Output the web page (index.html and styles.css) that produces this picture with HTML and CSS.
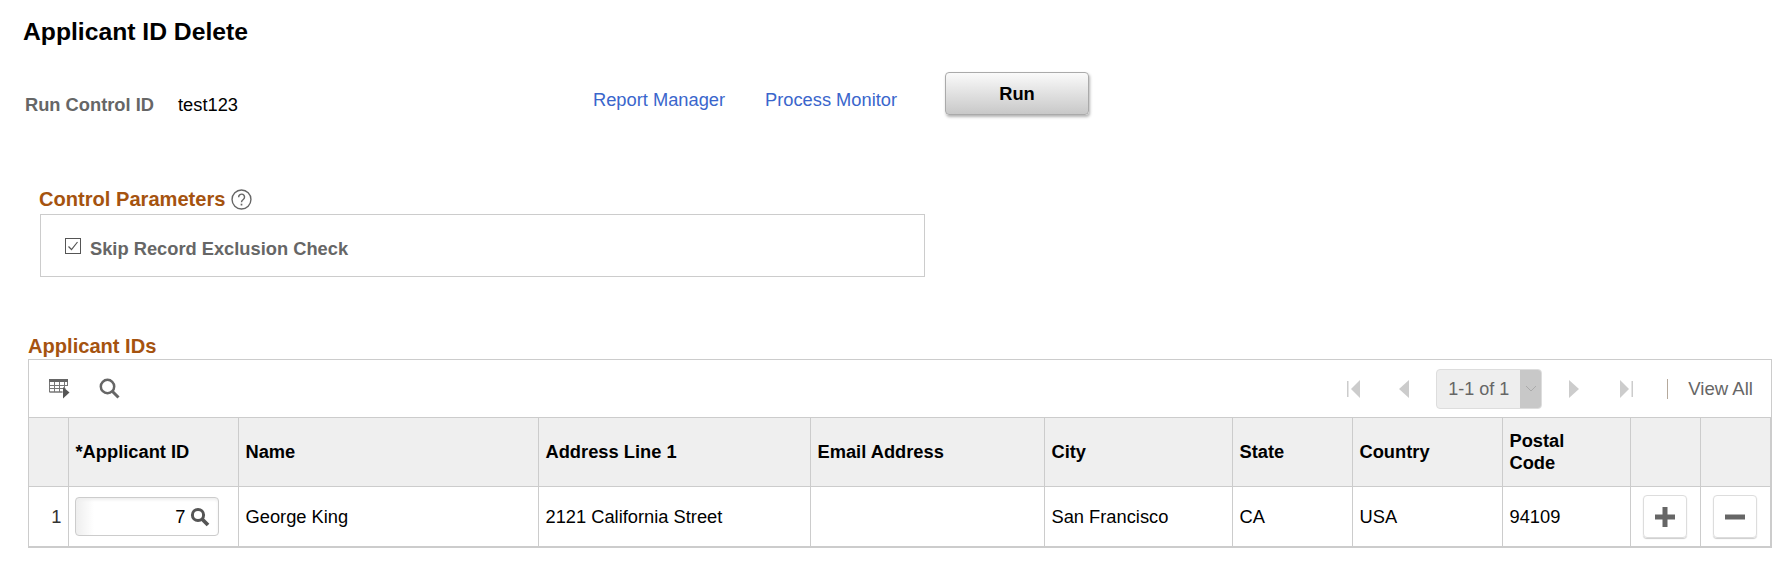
FILE: index.html
```html
<!DOCTYPE html>
<html lang="en">
<head>
<meta charset="utf-8">
<title>Applicant ID Delete</title>
<link rel="stylesheet" href="styles.css">
</head>
<body>
<h1 class="title">Applicant ID Delete</h1>
<div class="run-row">
  <span class="label">Run Control ID</span>
  <span class="value">test123</span>
  <a class="link link-first" href="#">Report Manager</a>
  <a class="link link-second" href="#">Process Monitor</a>
  <button class="run-btn" type="button">Run</button>
</div>
<section class="params">
  <h2 class="section-head">Control Parameters
    <svg class="help" viewBox="0 0 20 20" width="21" height="21"><circle cx="10" cy="10" r="9" fill="none" stroke="#666" stroke-width="1.3"/><path d="M7.3 7.8a2.8 2.8 0 1 1 4.4 2.2c-1.1.8-1.7 1.3-1.7 2.6" fill="none" stroke="#666" stroke-width="1.4"/><rect x="9.2" y="14" width="1.6" height="1.7" fill="#666"/></svg>
  </h2>
  <div class="params-box">
    <span class="check"><svg viewBox="0 0 16 16" width="16" height="16"><path d="M3.5 8.5l3 3 6-7.5" fill="none" stroke="#555" stroke-width="1.2"/></svg></span>
    <span class="check-label">Skip Record Exclusion Check</span>
  </div>
</section>
<section class="applicants">
  <h2 class="section-head grid-head">Applicant IDs</h2>
  <div class="grid">
    <div class="toolbar">
      <svg class="tool-table" viewBox="0 0 21 20" width="21" height="20">
        <rect x="0" y="0" width="19" height="3" fill="#666"/>
        <path d="M.5 3v10h13M.5 6.5h18M.5 9.5h16M.5 13h13M5.5 3v10M10.5 3v10M15.5 3v6M18.5 3v4" fill="none" stroke="#777" stroke-width="1"/>
        <path d="M14 8l6.5 5.5-6.5 6z" fill="#555"/>
      </svg>
      <svg class="tool-search" viewBox="0 0 21 21" width="21" height="21"><circle cx="8.5" cy="8.5" r="6.7" fill="none" stroke="#666" stroke-width="2.5"/><path d="M13.5 13.5l6 6" stroke="#666" stroke-width="3"/></svg>
      <div class="pager">
        <svg class="pg pg-first" viewBox="0 0 13 18" width="13" height="18"><rect x="0" y="1" width="1.5" height="16" fill="#ccc"/><path d="M13 0v18L4 9z" fill="#ccc"/></svg>
        <svg class="pg pg-prev" viewBox="0 0 10 18" width="10" height="18"><path d="M10 0v18L0 9z" fill="#ccc"/></svg>
        <div class="pg-select">
          <span class="pg-text">1-1 of 1</span>
          <span class="pg-arrow"><svg viewBox="0 0 12 7" width="12" height="7"><path d="M1 1l5 5 5-5" fill="none" stroke="#aaa" stroke-width="1"/></svg></span>
        </div>
        <svg class="pg pg-next" viewBox="0 0 10 18" width="10" height="18"><path d="M0 0v18l10-9z" fill="#ccc"/></svg>
        <svg class="pg pg-last" viewBox="0 0 13 18" width="13" height="18"><path d="M0 0v18l9-9z" fill="#ccc"/><rect x="11.5" y="1" width="1.5" height="16" fill="#ccc"/></svg>
        <span class="pg-sep"></span>
        <span class="view-all">View All</span>
      </div>
    </div>
    <table class="data">
      <colgroup>
        <col class="c-num"><col class="c-id"><col class="c-name"><col class="c-addr"><col class="c-email"><col class="c-city"><col class="c-state"><col class="c-country"><col class="c-postal"><col class="c-act"><col class="c-act">
      </colgroup>
      <thead>
        <tr>
          <th></th><th>*Applicant ID</th><th>Name</th><th>Address Line 1</th><th>Email Address</th><th>City</th><th>State</th><th>Country</th><th>Postal<br>Code</th><th></th><th></th>
        </tr>
      </thead>
      <tbody>
        <tr>
          <td class="num">1</td>
          <td class="id-cell"><div class="id-input"><span>7</span><svg viewBox="0 0 20 20" width="20" height="20"><circle cx="8" cy="8" r="5.6" fill="none" stroke="#555" stroke-width="3"/><path d="M12 12l6 6" stroke="#555" stroke-width="3.8"/></svg></div></td>
          <td>George King</td>
          <td>2121 California Street</td>
          <td></td>
          <td>San Francisco</td>
          <td>CA</td>
          <td>USA</td>
          <td>94109</td>
          <td class="act"><span class="act-btn"><svg viewBox="0 0 22 22" width="22" height="22"><path d="M11 1v20M1 11h20" stroke="#666" stroke-width="5"/></svg></span></td>
          <td class="act"><span class="act-btn"><svg viewBox="0 0 22 22" width="22" height="22"><path d="M1 11h20" stroke="#666" stroke-width="5"/></svg></span></td>
        </tr>
      </tbody>
    </table>
  </div>
</section>
</body>
</html>
```

FILE: styles.css
```css
* { box-sizing: border-box; }
html, body { margin: 0; padding: 0; background: #fff; }
body {
  width: 1787px;
  height: 565px;
  overflow: hidden;
  font-family: "Liberation Sans", Arial, sans-serif;
  font-size: 18.3px;
  color: #000;
}
.title {
  margin: 0;
  padding: 18px 0 0 23px;
  font-size: 24.7px;
  line-height: 28px;
  font-weight: 700;
}
.run-row {
  display: flex;
  align-items: flex-start;
  height: 69px;
  margin-top: 26px;
  padding-left: 25px;
}
.label { font-weight: 700; color: #666; margin-top: 22px; line-height: 22px; width: 153px; }
.value { margin-top: 22px; line-height: 22px; width: 415px; }
.link { color: #3a66cc; text-decoration: none; line-height: 22px; margin-top: 17px; }
.link-first { width: 172px; }
.link-second { width: 180px; }
.run-btn {
  width: 144px;
  height: 43px;
  margin: 0;
  padding: 0;
  border: 1px solid #aaa;
  border-radius: 4px;
  background: linear-gradient(#fafafa, #c8c8c8);
  box-shadow: 1px 2px 3px rgba(0,0,0,.3);
  font: 700 18.3px "Liberation Sans", Arial, sans-serif;
  color: #000;
}
.params { padding-left: 39px; margin-top: 46px; }
.section-head {
  margin: 0;
  display: flex;
  align-items: center;
  gap: 5px;
  font-size: 20.1px;
  line-height: 24px;
  font-weight: 700;
  color: #a5530f;
}
.help { display: block; }
.params-box {
  display: flex;
  align-items: center;
  width: 885px;
  height: 63px;
  margin: 3px 0 0 1px;
  padding: 7px 0 0 24px;
  border: 1px solid #ccc;
}
.check { display: block; width: 16px; height: 16px; border: 1px solid #555; margin-top: -6px; }
.check svg { display: block; margin: -1px; }
.check-label { margin-left: 9px; font-weight: 700; color: #666; }
.applicants { padding-left: 28px; margin-top: 57px; }
.grid-head { line-height: 24px; }
.grid {
  width: 1744px;
  height: 189px;
  border: 1px solid #ccc;
  margin-top: 1px;
  overflow: hidden;
}
.toolbar {
  display: flex;
  align-items: center;
  height: 57px;
  padding-left: 20px;
}
.tool-table { display: block; }
.tool-search { display: block; margin-left: 29px; }
.pager {
  display: flex;
  align-items: center;
  margin-left: auto;
  padding-right: 18px;
  color: #666;
}
.pg { display: block; }
.pg-prev { margin-left: 39px; }
.pg-select {
  display: flex;
  width: 106px;
  height: 40px;
  margin-left: 27px;
  border: 1px solid #ddd;
  border-radius: 4px;
  background: #eee;
  overflow: hidden;
}
.pg-text { flex: 1; line-height: 38px; padding-left: 11px; font-size: 18px; }
.pg-arrow { display: flex; align-items: center; justify-content: center; width: 21px; background: #c8c8c8; }
.pg-next { margin-left: 27px; }
.pg-last { margin-left: 41px; }
.pg-sep { width: 1px; height: 20px; margin-left: 34px; background: #b5a99c; }
.view-all { margin-left: 20px; font-size: 18.6px; }
.data {
  table-layout: fixed;
  border-collapse: collapse;
  width: 1741px;
  margin-top: 0;
}
.c-num { width: 39px; }
.c-id { width: 170px; }
.c-name { width: 300px; }
.c-addr { width: 272px; }
.c-email { width: 234px; }
.c-city { width: 188px; }
.c-state { width: 120px; }
.c-country { width: 150px; }
.c-postal { width: 128px; }
.c-act { width: 70px; }
th, td { border: 1px solid #ccc; padding: 0 6px 0 7px; text-align: left; }
th:first-child, td:first-child { border-left: 0; }
th {
  height: 69px;
  background: #efefef;
  line-height: 22px;
  font-weight: 700;
}
td { height: 60px; }
.num { text-align: right; color: #333; }
.id-input {
  display: flex;
  align-items: center;
  justify-content: flex-end;
  gap: 4px;
  width: 144px;
  height: 39px;
  padding-right: 8px;
  border: 1px solid #ccc;
  border-radius: 4px;
  background: linear-gradient(90deg, #eee, #fff 18px);
  box-shadow: inset 0 2px 3px #eee;
}
.id-input svg { display: block; }
.id-cell { padding: 0 6px; }
.act { padding: 0; text-align: center; }
.act-btn {
  display: inline-flex;
  align-items: center;
  justify-content: center;
  width: 44px;
  height: 43px;
  vertical-align: middle;
  border: 1px solid #ddd;
  border-radius: 4px;
  box-shadow: 0 1px 1px #ccc;
}
```
